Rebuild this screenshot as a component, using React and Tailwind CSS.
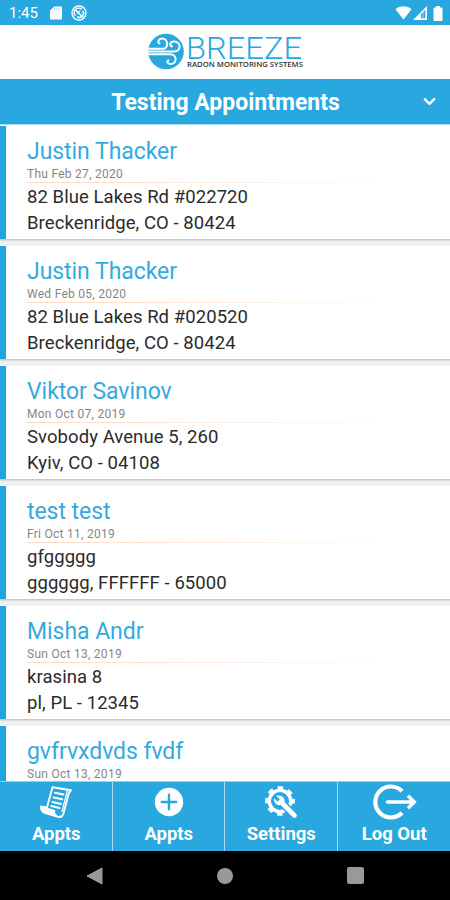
import React, { useState } from "react";
import { ChevronDown } from "lucide-react";

const appointments = [
  { id: 1, name: "Justin Thacker", date: "Thu Feb 27, 2020", street: "82 Blue Lakes Rd #022720", city: "Breckenridge, CO - 80424" },
  { id: 2, name: "Justin Thacker", date: "Wed Feb 05, 2020", street: "82 Blue Lakes Rd #020520", city: "Breckenridge, CO - 80424" },
  { id: 3, name: "Viktor Savinov", date: "Mon Oct 07, 2019", street: "Svobody Avenue 5, 260", city: "Kyiv, CO - 04108" },
  { id: 4, name: "test test", date: "Fri Oct 11, 2019", street: "gfggggg", city: "gggggg, FFFFFF - 65000" },
  { id: 5, name: "Misha Andr", date: "Sun Oct 13, 2019", street: "krasina 8", city: "pl, PL - 12345" },
  { id: 6, name: "gvfrvxdvds fvdf", date: "Sun Oct 13, 2019", street: "", city: "" },
];

// --- Icons ---
const ScrollIcon = () => (
  <svg width="34" height="34" viewBox="0 0 34 34" fill="none" stroke="white" strokeLinejoin="round" strokeLinecap="round">
    <path d="M13.5 2.2 L32 5.2 C30.5 7 29.8 8 29.3 10 L24.5 28.5 C23.6 31.5 21.5 32.5 19 31.8 L5 27.5 C2.8 26.5 2 24.5 2 21.5 L7.9 22.8 Z" strokeWidth="1.9" />
    <path d="M28.5 5 L23 26.5" strokeWidth="1.2" />
    <path d="M2 21.5 L15.5 25.5 C15.3 28.5 16.2 30.3 18.2 31.2 L5 27.5 C2.8 26.5 2 24.5 2 21.5 Z" fill="white" strokeWidth="1.2" />
    <path d="M16 7.8 L24.5 9.4 M14.7 12.4 L23.2 14.2 M13.5 17 L22 18.9 M12.3 21 L20.5 23" strokeWidth="2" />
  </svg>
);

const PlusIcon = () => (
  <svg width="30" height="30" viewBox="0 0 30 30">
    <circle cx="15" cy="15" r="14.2" fill="white" />
    <path d="M15 7.8v14.4M7.8 15h14.4" stroke="#29a8e0" strokeWidth="2.4" strokeLinecap="round" />
  </svg>
);

const SettingsIcon = () => (
  <svg width="34" height="34" viewBox="0 0 34 34" fill="none">
    <circle cx="16" cy="16" r="10.7" stroke="white" strokeWidth="3.4" />
    <circle cx="16" cy="16" r="13.1" stroke="white" strokeWidth="3.5" strokeDasharray="5.3 4.99" strokeDashoffset="2.65" />
    <path d="M17 17 L31 31" stroke="#29a8e0" strokeWidth="8" />
    <path d="M17 17 L30.5 30.5" stroke="white" strokeWidth="4.6" strokeLinecap="round" />
    <path d="M12.2 10.8 L15.8 14.2 L13.6 16.8 L10.2 13.3 C9.3 17.5 12.7 21 16.7 20 L20.5 16.5 C21 12.5 17 9.2 12.2 10.8Z" fill="white" />
  </svg>
);

const LogoutIcon = () => (
  <svg width="46" height="36" viewBox="0 0 46 36" fill="none" stroke="white" strokeWidth="4.2">
    <path d="M31 7.3 A15.5 15.5 0 1 0 31 28.7" />
    <path d="M16.5 18 H43" strokeWidth="3.4" strokeLinecap="round" />
    <path d="M37 11.8 L43.3 18 L37 24.2" strokeWidth="3.4" />
  </svg>
);

const tabs = [
  { label: "Appts", icon: <ScrollIcon /> },
  { label: "Appts", icon: <PlusIcon /> },
  { label: "Settings", icon: <SettingsIcon /> },
  { label: "Log Out", icon: <LogoutIcon /> },
];

const StatusBar = () => (
  <div className="flex h-[25px] shrink-0 items-center justify-between bg-[#29a8e0] pl-[9px] pr-[7px] pt-px text-white">
    <div className="flex items-center">
      <span className="w-[41px] text-[15px] leading-none">1:45</span>
      <svg width="12" height="14" viewBox="0 0 12 14" className="mr-[9px]">
        <path d="M4.2 0.5H11a1 1 0 0 1 1 1v11a1 1 0 0 1-1 1H1a1 1 0 0 1-1-1V4.5Z" fill="white" />
        <path d="M4.5 2v2.6M6.8 2v2.6M9.1 2v2.6" stroke="#9bd7f1" strokeWidth="0.9" />
      </svg>
      <svg width="16" height="16" viewBox="0 0 16 16" fill="none" stroke="white">
        <circle cx="8" cy="8" r="7" strokeWidth="1.4" />
        <path d="M4.3 10.7A4.5 4.5 0 0 1 10.7 4.4M12 6A4.5 4.5 0 0 1 6 12M3.8 4.2L12 12.2" strokeWidth="1.5" />
        <path d="M6 8.5l3-2.5" strokeWidth="1.3" />
      </svg>
    </div>
    <div className="flex items-center">
      <svg width="17" height="14" viewBox="0 0 17 14" className="mr-px">
        <path d="M0.5 3.2C5-.6 12-.6 16.5 3.2L8.5 13.5Z" fill="white" />
      </svg>
      <svg width="14" height="14" viewBox="0 0 14 14" className="mr-[6px]">
        <path d="M0 14L14 0V14Z" fill="white" />
        <path d="M8 8L12.3 3.7V12.3H8Z" fill="#29a8e0" />
        <path d="M10 6V12.3" stroke="white" strokeWidth="0.6" />
      </svg>
      <svg width="10" height="15" viewBox="0 0 10 15">
        <path d="M3 0h4v1.5h1.5a1 1 0 0 1 1 1V14a1 1 0 0 1-1 1h-7a1 1 0 0 1-1-1V2.5a1 1 0 0 1 1-1H3Z" fill="white" />
      </svg>
    </div>
  </div>
);

const Logo = () => (
  <div className="flex h-[54px] shrink-0 items-start bg-white pl-[148px]">
    <svg width="36" height="37" viewBox="0 0 36 37" fill="none" className="mt-2">
      <circle cx="18" cy="18.5" r="17.8" fill="#29a8e0" />
      <g stroke="white" strokeWidth="1.9" strokeLinecap="round">
        <path d="M0 15.7H15C21 15.7 20.5 5.5 14 5.5C10.5 5.5 9 9.5 11.5 10.5" />
        <path d="M0 18.5H26C34 18.5 33 8.5 26 8.5C22 8.5 21 12.5 24 13.5" />
        <path d="M0 21.3H22C30 21.3 29 32 22 31C19 30.5 18.5 28 20.5 27.5" />
      </g>
    </svg>
    <svg width="120" height="54" viewBox="0 0 120 54" className="ml-[2px]">
      <text x="0" y="34" textLength="116" lengthAdjust="spacingAndGlyphs" fill="#29a8e0" className="font-[Roboto] text-[32px] font-light">BREEZE</text>
      <text x="1" y="42" textLength="116" lengthAdjust="spacingAndGlyphs" fill="#333333" className="font-['Open_Sans'] text-[6.5px] font-semibold">RADON MONITORING SYSTEMS</text>
    </svg>
  </div>
);

const AppointmentCard = ({ item }) => (
  <div className="flex h-[120px] shrink-0 flex-col bg-[#f0f0f0]">
    <div className="flex h-[113px]">
      <div className="w-[6px] bg-[#22a5df]" />
      <div className="flex-1 bg-white pl-[21px] pt-[10px]">
        <h2 className="h-[31px] text-[23px] leading-[31px] tracking-[-0.05px] whitespace-nowrap text-[#35a9df]">{item.name}</h2>
        <p className="h-[15px] text-[12px] leading-[15px] tracking-[0.27px] text-[#858585]">{item.date}</p>
        <div className="h-px w-[345px] bg-linear-to-r from-[#ffd9c4] to-[#fffaf7]" />
        <p className="mt-px h-[26px] text-[18.5px] leading-[26px] tracking-[0.07px] whitespace-nowrap text-[#2b2b2b]">{item.street}</p>
        <p className="h-[26px] text-[18.5px] leading-[26px] tracking-[0.07px] whitespace-nowrap text-[#2b2b2b]">{item.city}</p>
      </div>
    </div>
    <div className="h-px bg-[#c8c8c8]" />
    <div className="h-px bg-[#dddddd]" />
  </div>
);

const App = () => {
  const [activeTab, setActiveTab] = useState(0);

  return (
    <div className="flex h-[900px] w-[450px] flex-col overflow-hidden bg-white font-[Roboto,sans-serif]">
      <StatusBar />
      <Logo />

      {/* Title bar */}
      <div className="grid h-[46px] shrink-0 grid-cols-[40px_1fr_40px] items-center border-b border-[#a9dcf3] bg-[#29a8e0] text-white">
        <h1 className="col-start-2 pt-[3px] pl-px text-center text-[23px] font-bold whitespace-nowrap">Testing Appointments</h1>
        <ChevronDown size={19} strokeWidth={2.8} className="ml-[10px]" />
      </div>

      {/* Appointment list */}
      <div className="flex min-h-0 flex-1 flex-col overflow-hidden pt-px">
        {appointments.map((item) => (
          <AppointmentCard key={item.id} item={item} />
        ))}
      </div>

      {/* Bottom tabs */}
      <div className="grid h-[70px] shrink-0 grid-cols-4 border-t border-[#8fd0ee] bg-[#29a8e0]">
        {tabs.map((tab, i) => (
          <button
            key={i}
            type="button"
            aria-pressed={activeTab === i}
            onClick={() => setActiveTab(i)}
            className="flex flex-col items-center border-r border-[#a9dcf3] pl-px text-white last:border-r-0"
          >
            <span className="flex h-[39px] items-center justify-center">{tab.icon}</span>
            <span className="text-[18.5px] leading-[26px] font-bold">{tab.label}</span>
          </button>
        ))}
      </div>

      {/* Android navigation */}
      <div className="flex h-[49px] shrink-0 items-center justify-between bg-black pl-[86px] pr-[86px]">
        <svg width="17" height="18" viewBox="0 0 17 18">
          <path d="M1 9L16 1V17Z" fill="#999999" stroke="#999999" strokeLinejoin="round" />
        </svg>
        <div className="size-4 rounded-full bg-[#999999]" />
        <div className="size-[17px] rounded-[2px] bg-[#999999]" />
      </div>
    </div>
  );
};

export default App;
